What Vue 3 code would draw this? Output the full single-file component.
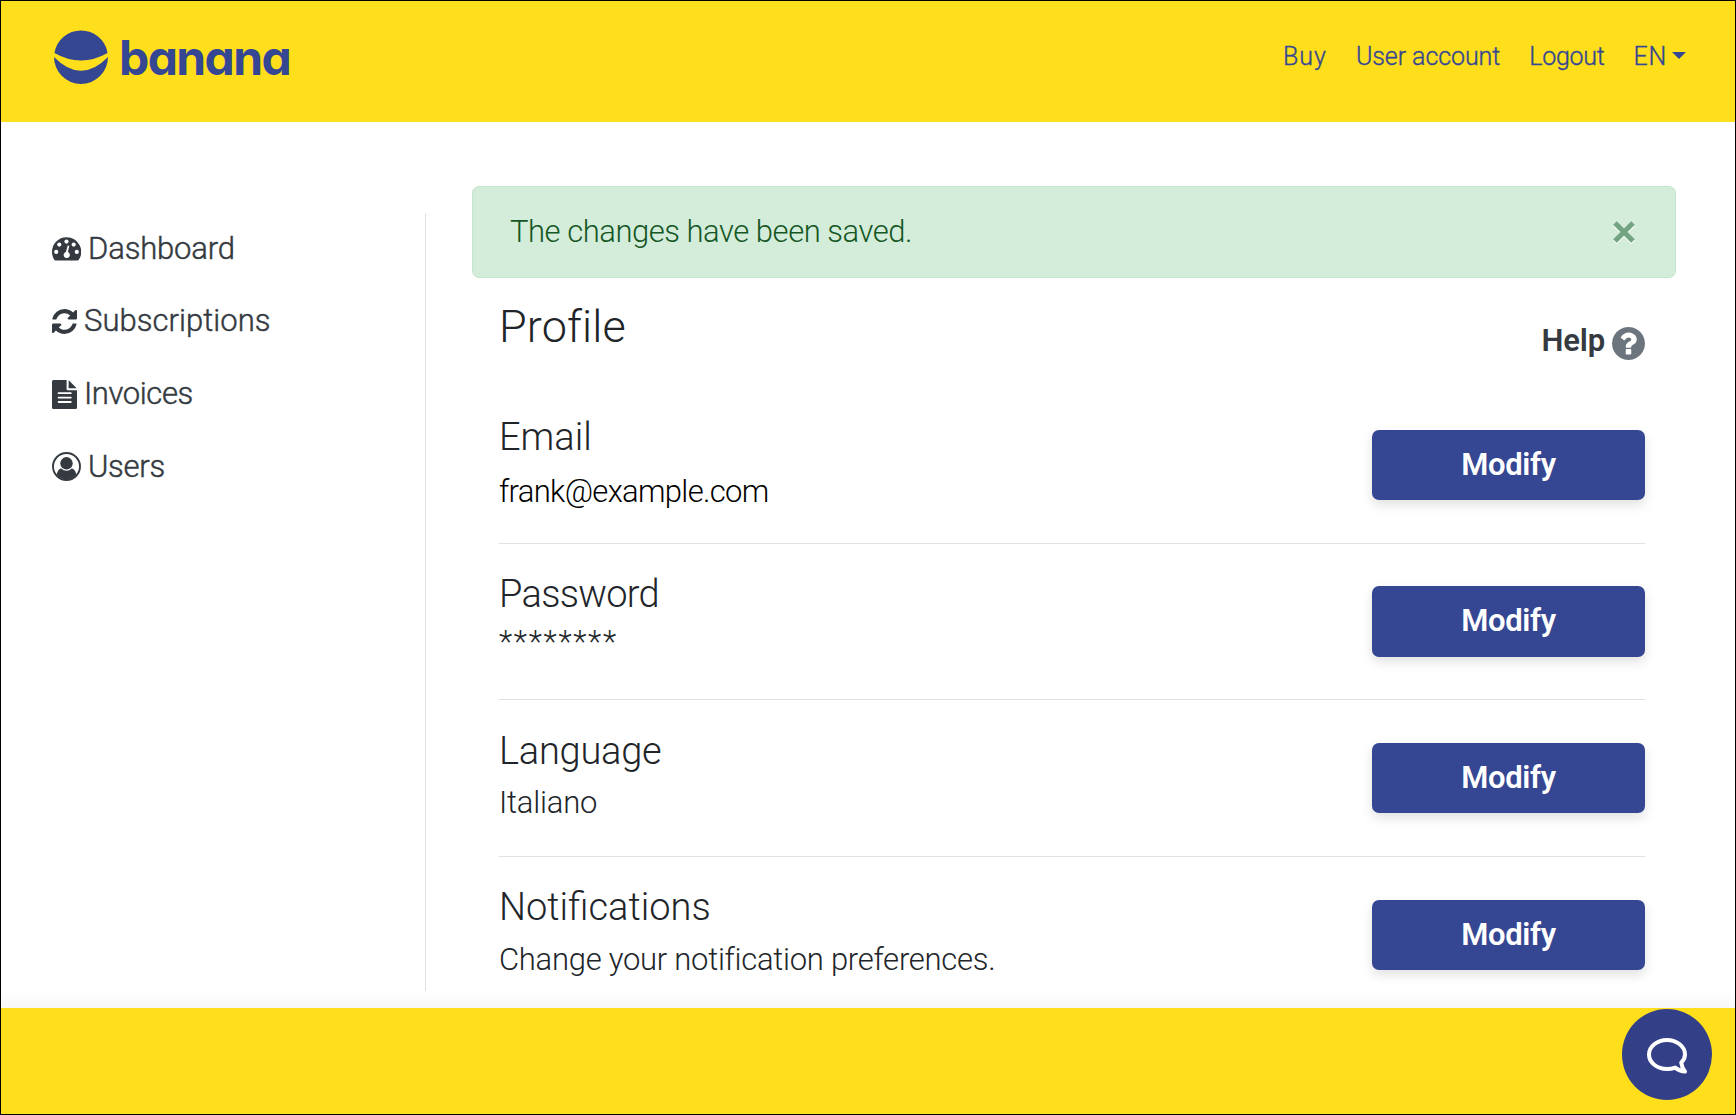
<script setup>
const navLinks = [
  { label: 'Buy', spacing: 1 },
  { label: 'User account', spacing: -0.08 },
  { label: 'Logout', spacing: -0.25 },
]

const menu = [
  { label: 'Dashboard', icon: 'gauge', spacing: -0.15 },
  { label: 'Subscriptions', icon: 'refresh', spacing: 0.05 },
  { label: 'Invoices', icon: 'file', spacing: -0.4 },
  { label: 'Users', icon: 'user', spacing: -0.3 },
]

const sections = [
  { key: 'email', title: 'Email', value: 'frank@example.com' },
  { key: 'password', title: 'Password', value: '********' },
  { key: 'language', title: 'Language', value: 'Italiano' },
  { key: 'notifications', title: 'Notifications', value: 'Change your notification preferences.' },
]
</script>

<template>
  <div class="page">
    <header class="header">
      <a class="brand">
        <svg class="brand-mark" viewBox="0 0 54 54" width="54" height="54">
          <path d="M.4 22.9A27 27 0 0 1 53.6 22.9Q27 37.9.4 22.9Z" />
          <path d="M0 27Q27 54.6 54 27A27 27 0 0 1 0 27Z" />
        </svg>
        <span class="brand-name">banana</span>
      </a>
      <nav class="nav">
        <a v-for="link in navLinks" :key="link.label" :style="{ letterSpacing: link.spacing + 'px' }">{{ link.label }}</a>
        <a class="lang"><span>EN</span><i class="caret"></i></a>
      </nav>
    </header>

    <main class="main">
      <aside class="sidebar">
        <a v-for="item in menu" :key="item.label" class="menu-item">
          <svg v-if="item.icon === 'gauge'" viewBox="0 0 29 24" width="29" height="24">
            <path d="M14.5 .3A14.5 14.5 0 0 0 0 14.8C0 17.7.8 20.4 2.2 22.7Q2.7 23.5 3.6 23.5H25.4Q26.3 23.5 26.8 22.7A14.5 14.5 0 0 0 14.5 .3Z" />
            <g fill="#fff">
              <circle cx="4.2" cy="14.9" r="2.1" /><circle cx="7.3" cy="7.6" r="2.1" /><circle cx="14.5" cy="4.6" r="2.1" /><circle cx="21.7" cy="7.6" r="2.1" /><circle cx="24.8" cy="14.9" r="2.1" />
              <path d="M15.7 8.4 17.3 8.8 15.9 15.1A3.1 3.1 0 1 1 13.9 15Z" />
            </g>
          </svg>
          <svg v-else-if="item.icon === 'refresh'" viewBox="0 128 1536 1536" width="25" height="25">
            <path d="M1511 1056q0 5-1 7-64 268-268 434.5t-478 166.5q-146 0-282.5-55t-243.5-157l-129 129q-19 19-45 19t-45-19-19-45v-448q0-26 19-45t45-19h448q26 0 45 19t19 45-19 45l-137 137q71 66 161 102t187 36q134 0 250-65t186-179q11-17 53-117 8-23 30-23h192q13 0 22.5 9.5t9.5 22.5zm25-800v448q0 26-19 45t-45 19h-448q-26 0-45-19t-19-45 19-45l138-138q-148-137-349-137-134 0-250 65t-186 179q-11 17-53 117-8 23-30 23h-199q-13 0-22.5-9.5t-9.5-22.5v-7q65-268 270-434.5t480-166.5q146 0 284 55.5t245 156.5l130-129q19-19 45-19t45 19 19 45z" />
          </svg>
          <svg v-else-if="item.icon === 'file'" viewBox="0 0 25 29" width="25" height="29">
            <path d="M1.500 0H14.600V9Q14.600 10.300 16 10.300H25V27.500Q25 29 23.500 29H1.500Q0 29 0 27.500V1.500Q0 0 1.500 0Z" />
            <path d="M16.600 .5Q17.200 .8 17.700 1.300L23.700 7.200Q24.200 7.700 24.500 8.300H16.600Z" />
            <path d="M6.600 13.200H18.800M6.600 17.600H18.800M6.600 22H18.800" stroke="#fff" stroke-width="1.800" stroke-linecap="round" />
          </svg>
          <svg v-else viewBox="0 0 29 29" width="29" height="29">
            <circle cx="14.5" cy="14.5" r="13.5" fill="none" stroke="currentColor" stroke-width="1.9" />
            <circle cx="14.5" cy="11.3" r="6.2" />
            <path d="M9.300 16.600Q11.500 18.800 14.500 18.800T19.700 16.600Q23.100 16.900 24.300 22.600 20.500 27.400 14.500 27.400T4.700 22.600Q5.900 16.900 9.300 16.600Z" />
          </svg>
          <span :style="{ letterSpacing: item.spacing + 'px' }">{{ item.label }}</span>
        </a>
      </aside>

      <section class="content">
        <div class="alert">
          <span>The changes have been saved.</span>
          <svg class="close" viewBox="0 0 22 22" width="22" height="22">
            <path d="M2 3.500 20 21.500M20 3.500 2 21.500" stroke="#f1f9f3" />
            <path d="M2 2 20 20M20 2 2 20" stroke="#75a483" />
          </svg>
        </div>

        <div class="profile">
          <div class="profile-head">
            <h1>Profile</h1>
            <a class="help">
              <span>Help</span>
              <svg viewBox="128 128 1536 1536" width="33" height="33">
                <path d="M1024 1376v-192q0-14-9-23t-23-9h-192q-14 0-23 9t-9 23v192q0 14 9 23t23 9h192q14 0 23-9t9-23zm256-672q0-88-55.5-163t-138.5-116-170-41q-243 0-371 213-15 24 8 42l132 100q7 6 19 6 16 0 25-12 53-68 86-92 34-24 86-24 48 0 85.5 26t37.5 59q0 38-20 61t-68 45q-63 28-115.5 86.5t-52.5 125.5v36q0 14 9 23t23 9h192q14 0 23-9t9-23q0-19 21.5-49.5t54.5-49.5q32-18 49-28.5t46-35 44.5-48 28-60.5 12.5-81zm384 192q0 209-103 385.5t-279.5 279.5-385.5 103-385.5-103-279.5-279.5-103-385.5 103-385.5 279.5-279.5 385.5-103 385.5 103 279.5 279.5 103 385.5z" />
              </svg>
            </a>
          </div>

          <div v-for="section in sections" :key="section.key" class="row" :class="section.key">
            <div class="row-text">
              <h2>{{ section.title }}</h2>
              <p>{{ section.value }}</p>
            </div>
            <button type="button">Modify</button>
          </div>
        </div>
      </section>
    </main>

    <footer class="footer">
      <button type="button" class="chat" aria-label="Chat">
        <svg class="bubble" viewBox="0 0 40 36" width="40" height="36">
          <path d="M34.200 24.600C36.600 22.300 38 19.500 38 16.500C38 8.500 30 2 20 2S2 8.500 2 16.500 10 31 20 31C22.900 31 25.700 30.500 28.100 29.600C30.800 31.800 34 33.200 38 33.500C36 31.100 34.700 28.200 34.200 24.600Z" />
        </svg>
      </button>
    </footer>
  </div>
</template>

<style>
body {
  margin: 0;
}
</style>

<style scoped>
.page {
  box-sizing: border-box;
  width: 1736px;
  height: 1115px;
  border: 1px solid #000;
  display: flex;
  flex-direction: column;
  overflow: hidden;
  background: #fff;
  color: #212529;
  font-family: Roboto, "Liberation Sans", sans-serif;
  font-size: 31px;
  line-height: 40px;
  font-weight: 300;
}

svg {
  flex: none;
  display: block;
  fill: currentColor;
}

.header {
  box-sizing: border-box;
  flex: none;
  height: 121px;
  padding: 29px 49px 0 53px;
  display: flex;
  justify-content: space-between;
  align-items: flex-start;
  background: #ffdf1c;
  color: #354793;
}

.brand {
  display: flex;
  align-items: center;
}

.brand-name {
  margin: 2px 0 0 11px;
  font-family: Inter, sans-serif;
  font-size: 48px;
  line-height: 50px;
  font-weight: 700;
  letter-spacing: -1.6px;
  font-feature-settings: "cv11";
}

.nav {
  display: flex;
  gap: 29px;
  padding-top: 7px;
  font-size: 25px;
  -webkit-text-stroke: 0.35px currentColor;
}

.lang {
  display: flex;
  align-items: center;
  letter-spacing: 0.7px;
}

.caret {
  margin: 0 0 4px 5px;
  border: 7px solid transparent;
  border-top-color: #354793;
  border-bottom: 0;
}

.main {
  flex: none;
  height: 886px;
  display: flex;
  align-items: flex-start;
  background: linear-gradient(#fff, #f7f7f7) bottom / 100% 17px no-repeat;
}

.sidebar {
  box-sizing: border-box;
  width: 425px;
  height: 778px;
  margin-top: 91px;
  padding-left: 51px;
  border-right: 1px solid #dee2e6;
  color: #343a40;
}

.menu-item {
  display: flex;
  align-items: center;
  gap: 7px;
  height: 72.5px;
}

.menu-item:nth-child(2) {
  height: 71.5px;
  padding-bottom: 1px;
}

.menu-item span {
  -webkit-text-stroke: 0.45px currentColor;
}

.content {
  flex: none;
  width: 1204px;
  margin: 64px 0 0 46px;
}

.alert {
  box-sizing: border-box;
  height: 92px;
  padding: 0 40px 0 37px;
  display: flex;
  align-items: center;
  justify-content: space-between;
  border: 1px solid #c3e6cb;
  border-radius: 7px;
  background: #d4edda;
  color: #155724;
  letter-spacing: -0.48px;
}

.close {
  overflow: visible;
  fill: none;
  stroke-width: 5;
}

.profile {
  padding: 0 31px 0 27px;
}

.profile-head {
  height: 109px;
  display: flex;
  justify-content: space-between;
}

h1,
h2,
p {
  margin: 0;
  font-weight: 300;
}

h1 {
  margin-top: 19px;
  font-size: 45px;
  line-height: 60px;
  letter-spacing: 0.1px;
}

.help {
  display: flex;
  gap: 7px;
  height: 40px;
  margin-top: 43px;
  font-weight: 600;
  letter-spacing: -0.13px;
  color: #343a40;
}

.help svg {
  margin-top: 6px;
  color: #6c757d;
}

.row {
  box-sizing: border-box;
  height: 156.7px;
  display: flex;
  justify-content: space-between;
  border-bottom: 1px solid #dee2e6;
}

.row:last-child {
  border-bottom: 0;
}

.row-text {
  padding-top: 27.4px;
}

h2 {
  font-size: 38px;
  line-height: 46px;
}

p {
  margin-top: 9.6px;
}

.email p {
  margin-top: 11.6px;
  color: #000;
  letter-spacing: -0.67px;
}

.password h2 {
  letter-spacing: -0.7px;
}

.password p {
  margin-top: 4.6px;
  letter-spacing: 1.7px;
}

.language h2 {
  letter-spacing: -0.25px;
}

.language p {
  letter-spacing: -0.2px;
}

.notifications p {
  letter-spacing: -0.27px;
}

.row button {
  width: 273px;
  height: 70.4px;
  margin-top: 42.6px;
  padding: 0;
  border: 0;
  border-radius: 7px;
  background: #354793;
  color: #fff;
  font: inherit;
  font-weight: 600;
  letter-spacing: -0.34px;
  box-shadow: 0 5px 12px rgba(0, 0, 0, 0.12);
}

.footer {
  box-sizing: border-box;
  flex: 1;
  padding: 1px 23px 0 0;
  display: flex;
  justify-content: flex-end;
  background: #ffdf1c;
}

.chat {
  width: 90px;
  height: 91px;
  padding: 2px 0 0;
  display: grid;
  place-items: center;
  border: 0;
  border-radius: 50%;
  background: #333f87;
}

.bubble {
  fill: none;
  stroke: #fff;
  stroke-width: 4;
  stroke-linejoin: round;
}
</style>
